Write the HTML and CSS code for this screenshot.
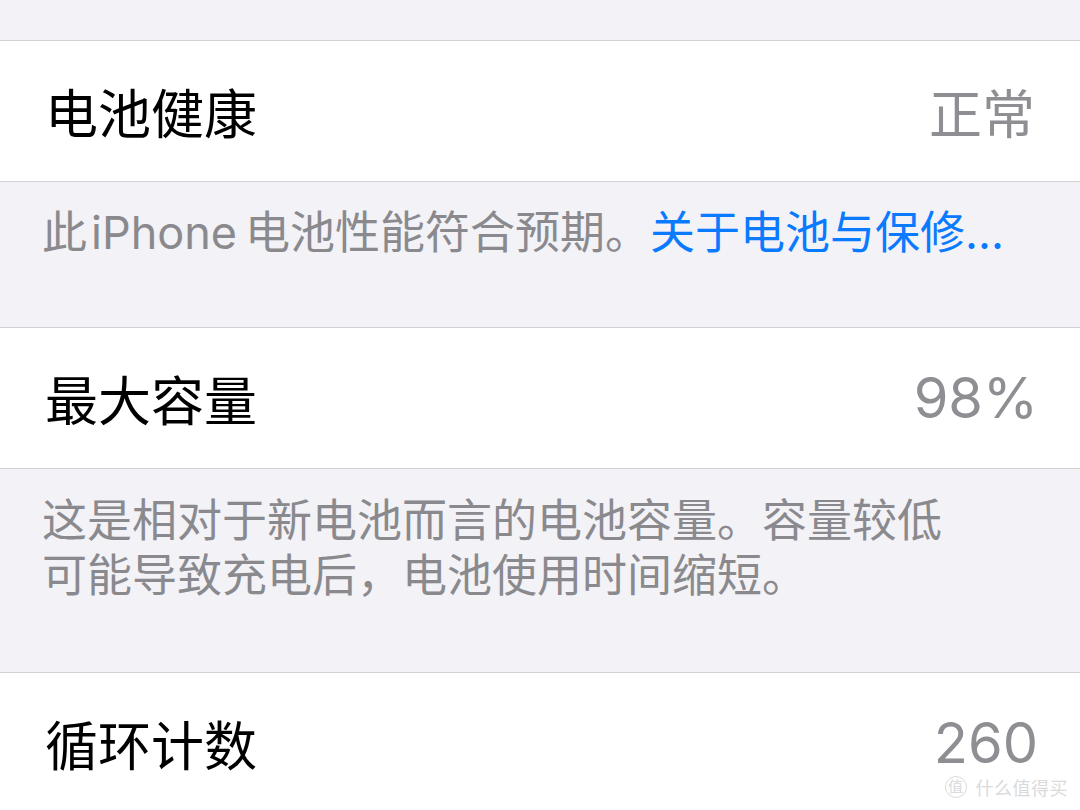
FILE: index.html
```html
<!DOCTYPE html>
<html lang="zh-CN">
<head>
  <meta charset="UTF-8">
  <meta name="viewport" content="width=device-width, initial-scale=1.0">
  <title>电池健康</title>
  <link rel="stylesheet" href="styles.css">
</head>
<body>
  <div class="top-space"></div>

  <div class="cell">
    <span class="label">电池健康</span>
    <span class="value">正常</span>
  </div>
  <div class="note">此<span class="latin">iPhone</span>电池性能符合预期。<a class="link" href="#">关于电池与保修...</a></div>

  <div class="cell">
    <span class="label">最大容量</span>
    <span class="value num">98%</span>
  </div>
  <div class="note two-line">这是相对于新电池而言的电池容量。容量较低<br>可能导致充电后，电池使用时间缩短。</div>

  <div class="cell">
    <span class="label">循环计数</span>
    <span class="value num">260</span>
  </div>

  <div class="watermark">
    <span class="wm-badge">值</span>
    <span class="wm-text">什么值得买</span>
  </div>
</body>
</html>
```

FILE: styles.css
```css
body {
  margin: 0;
  background: #f2f2f7;
  font-family: "Inter", "Noto Sans CJK SC", sans-serif;
  overflow: hidden;
}
.top-space {
  height: 40px;
}
.cell {
  display: flex;
  align-items: center;
  justify-content: space-between;
  height: 140px;
  padding: 0 45px;
  background: #fff;
  border-top: 1px solid #d1d1d6;
  border-bottom: 1px solid #d1d1d6;
}
.label {
  font-size: 53px;
  color: #000;
}
.value {
  font-size: 53px;
  color: #8e8e93;
}
.value.num {
  font-size: 56px;
  margin-right: -3px;
}
.note {
  padding: 23px 42px 67px;
  font-size: 45px;
  line-height: 55px;
  color: #8a8a8e;
}
.note.two-line {
  padding-top: 24px;
  padding-bottom: 69px;
}
.latin {
  margin: 0 8px 0 4px;
}
.link {
  color: #0a7aff;
  text-decoration: none;
}
.watermark {
  position: absolute;
  right: 12px;
  bottom: 10px;
  display: flex;
  align-items: center;
  gap: 9px;
  color: #dadada;
}
.wm-badge {
  width: 20px;
  height: 20px;
  border: 1.5px solid #dadada;
  border-radius: 50%;
  font-size: 15px;
  line-height: 20px;
  text-align: center;
}
.wm-text {
  font-size: 18px;
  letter-spacing: 0.5px;
}
```
